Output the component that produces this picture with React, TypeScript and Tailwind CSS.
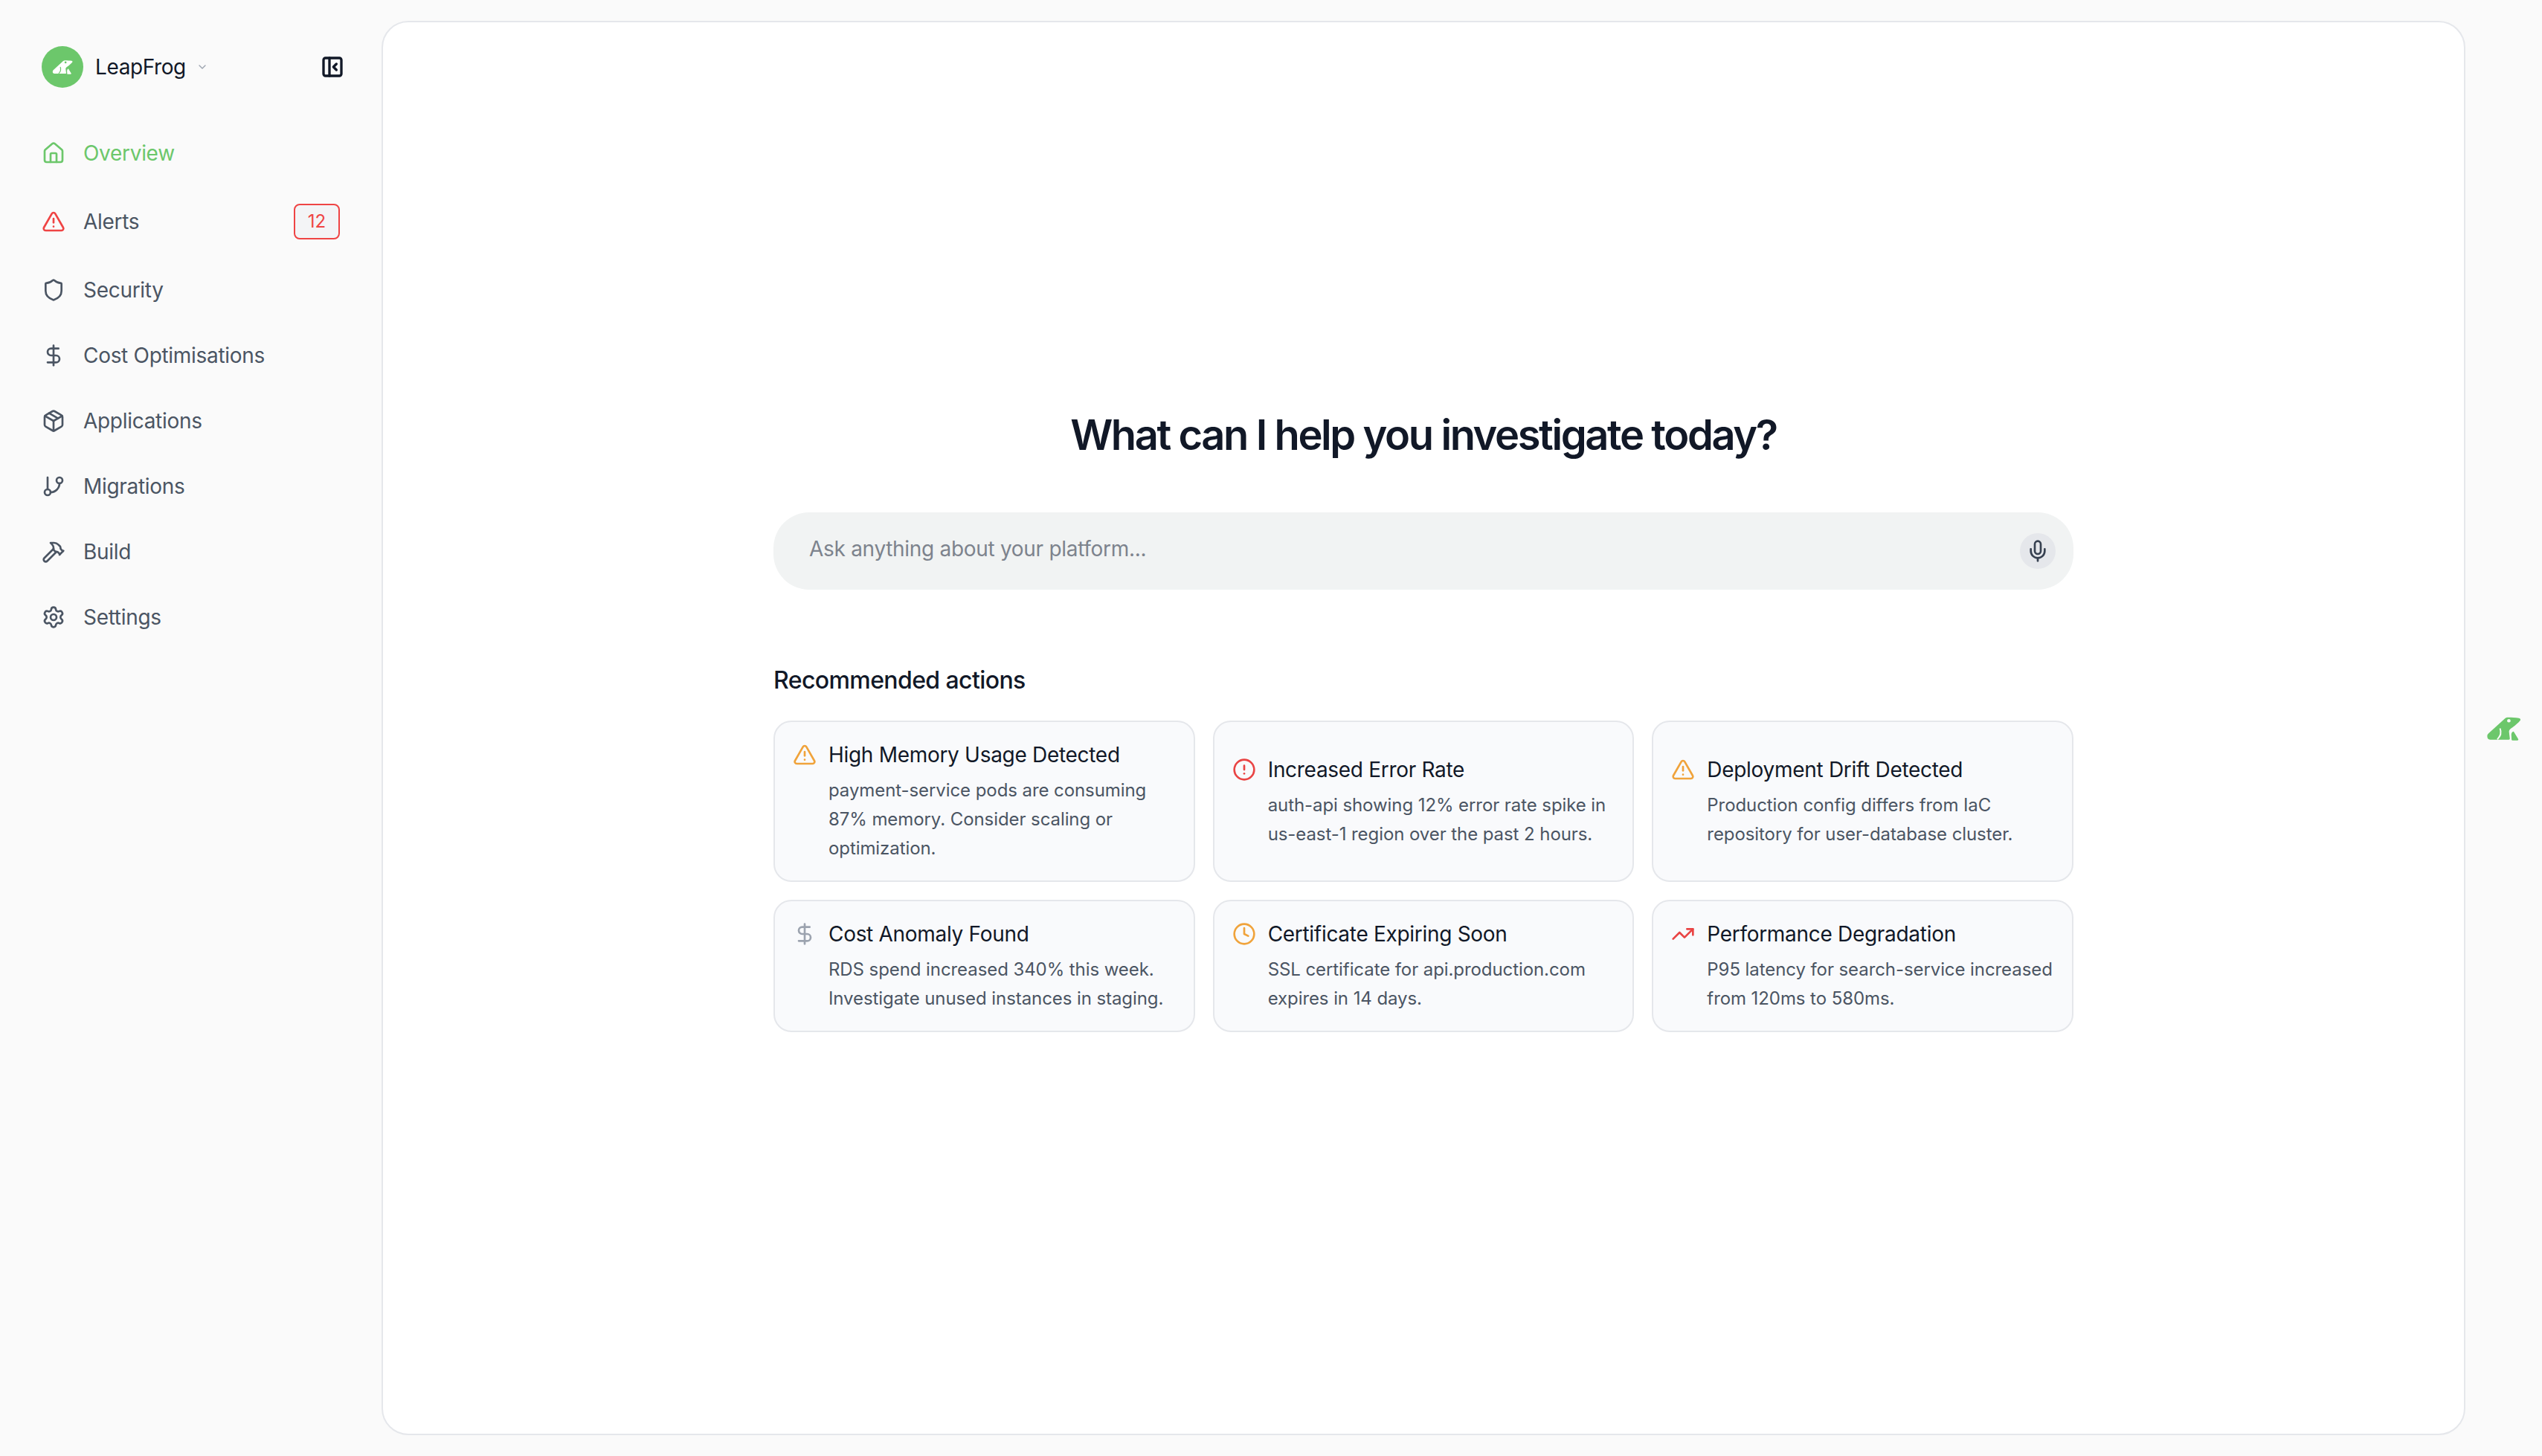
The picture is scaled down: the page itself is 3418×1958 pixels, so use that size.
import {
  ChevronDown,
  CircleAlert,
  Clock,
  DollarSign,
  Hammer,
  House,
  Mic,
  Package,
  PanelLeftClose,
  Settings,
  Shield,
  TrendingUp,
  TriangleAlert,
} from "lucide-react";

function FrogLogo({ className, eye }: { className: string; eye: string }) {
  return (
    <svg viewBox="188 130 142 100" className={className} fill="currentColor">
      <path d="M192 212c0-5 2-8 6-12l66-60c4-4 8-5 14-5 14 0 30 1 43 3 6 1 8 5 5 10-8 10-25 24-37 32-7 5-9 9-8 17l3 24c0 3-1 5-4 5h-76c-8 0-12-5-12-14z" />
      <path d="M296 194c2-2 4-1 5 1l17 28c2 3 0 6-3 6h-20c-3 0-4-2-4-5l-1-18c0-5 2-9 6-12z" />
      <path d="M244 180c6 15 5 29-11 45" fill="none" stroke={eye} strokeWidth="6" />
      <circle cx="280" cy="149" r="7" fill={eye} />
    </svg>
  );
}

// lucide's current git-branch has a different curve, this is the older one
function BranchIcon({ className }: { className: string }) {
  return (
    <svg viewBox="0 0 24 24" className={className} fill="none" stroke="currentColor" strokeWidth="2" strokeLinecap="round" strokeLinejoin="round">
      <line x1="6" y1="3" x2="6" y2="15" />
      <circle cx="18" cy="6" r="3" />
      <circle cx="6" cy="18" r="3" />
      <path d="M18 9a9 9 0 0 1-9 9" />
    </svg>
  );
}

const navItems = [
  { label: "Security", icon: Shield },
  { label: "Cost Optimisations", icon: DollarSign },
  { label: "Applications", icon: Package },
  { label: "Migrations", icon: BranchIcon },
  { label: "Build", icon: Hammer },
  { label: "Settings", icon: Settings },
];

const actions = [
  {
    title: "High Memory Usage Detected",
    text: "payment-service pods are consuming 87% memory. Consider scaling or optimization.",
    icon: TriangleAlert,
    color: "text-[#f0a33b]",
  },
  {
    title: "Increased Error Rate",
    text: "auth-api showing 12% error rate spike in us-east-1 region over the past 2 hours.",
    icon: CircleAlert,
    color: "text-[#e94444]",
  },
  {
    title: "Deployment Drift Detected",
    text: "Production config differs from IaC repository for user-database cluster.",
    icon: TriangleAlert,
    color: "text-[#f0a33b]",
  },
  {
    title: "Cost Anomaly Found",
    text: "RDS spend increased 340% this week. Investigate unused instances in staging.",
    icon: DollarSign,
    color: "text-[#9ca3af]",
  },
  {
    title: "Certificate Expiring Soon",
    text: "SSL certificate for api.production.com expires in 14 days.",
    icon: Clock,
    color: "text-[#f0a33b]",
  },
  {
    title: "Performance Degradation",
    text: "P95 latency for search-service increased from 120ms to 580ms.",
    icon: TrendingUp,
    color: "text-[#e94444]",
  },
];

export default function App() {
  return (
    <div className="flex h-screen w-full overflow-hidden bg-[#fafafa] font-['Inter',sans-serif]">
      {/* Sidebar */}
      <aside className="w-[513px] shrink-0 pl-[56px] pr-[50px] pt-[62px]">
        <div className="flex h-[56px] items-center justify-between">
          <div className="flex items-center">
            <div className="flex h-[56px] w-[56px] items-center justify-center rounded-full bg-[#6cc76b] text-white">
              <FrogLogo className="h-[20px] w-[28px]" eye="#6cc76b" />
            </div>
            <span className="ml-[16px] text-[28px] leading-[40px] font-normal tracking-[-0.4px] text-[#111827]">LeapFrog</span>
            <ChevronDown className="ml-[14px] h-[16px] w-[16px] text-[#9ca3af]" />
          </div>
          <PanelLeftClose className="h-[32px] w-[32px] text-[#111827]" strokeWidth={2.5} />
        </div>

        <nav className="mt-[44px] pr-[6px]">
          <div className="flex h-[88px] items-center gap-[24px] text-[#6cc76b]">
            <House className="h-[32px] w-[32px]" />
            <span className="text-[28px] leading-[40px] font-normal tracking-[-0.3px]">Overview</span>
          </div>
          <div className="flex h-[96px] items-center gap-[24px] text-[#4b5563]">
            <TriangleAlert className="h-[32px] w-[32px] text-[#ef4444]" />
            <span className="flex-1 text-[28px] leading-[40px] font-normal tracking-[-0.3px]">Alerts</span>
            <span className="flex h-[48px] w-[62px] items-center justify-center rounded-[8px] border-2 border-[#ef4444] bg-[#f3f4f6] text-[24px] font-normal text-[#ef4444]">
              12
            </span>
          </div>
          {navItems.map((item) => {
            const Icon = item.icon;
            return (
              <div key={item.label} className="flex h-[88px] items-center gap-[24px] text-[#4b5563]">
                <Icon className="h-[32px] w-[32px]" />
                <span className="text-[28px] leading-[40px] font-normal tracking-[-0.3px]">{item.label}</span>
              </div>
            );
          })}
        </nav>
      </aside>

      {/* Main panel */}
      <main className="my-[28px] flex flex-1 flex-col items-center rounded-[36px] border-2 border-[#e5e7eb] bg-white pt-[519px]">
        <div className="w-[1748px]">
          <h1 className="text-center text-[56px] leading-[72px] font-semibold tracking-[-2.4px] text-[#111827]">
            What can I help you investigate today?
          </h1>

          <div className="mt-[68px] flex h-[104px] items-center justify-between rounded-[48px] bg-[#f1f3f3] pl-[48px] pr-[24px]">
            <span className="-mt-[6px] text-[28px] leading-[40px] tracking-[-0.3px] text-[#7d838d]">Ask anything about your platform...</span>
            <button className="flex h-[48px] w-[48px] items-center justify-center rounded-full bg-[#e5e7eb] text-[#374151]">
              <Mic className="h-[32px] w-[32px]" />
            </button>
          </div>

          <h2 className="mt-[100px] text-[32px] leading-[44px] font-medium tracking-[-0.6px] text-[#111827]">Recommended actions</h2>

          <div className="mt-[32px] grid grid-cols-3 gap-[24px]">
            {actions.map((action) => {
              const Icon = action.icon;
              return (
                <div
                  key={action.title}
                  className="flex items-center rounded-[24px] border-2 border-[#e5e7eb] bg-[#f9fafc] p-[24px]"
                >
                  <div className="flex gap-[16px]">
                    <div className="flex h-[40px] shrink-0 items-center">
                      <Icon className={`h-[32px] w-[32px] ${action.color}`} />
                    </div>
                    <div>
                      <div className="text-[28px] leading-[40px] font-normal tracking-[-0.3px] text-[#111827]">{action.title}</div>
                      <p className="mt-[8px] text-[24px] leading-[39px] tracking-[-0.08px] text-[#4b5563]">{action.text}</p>
                    </div>
                  </div>
                </div>
              );
            })}
          </div>
        </div>
      </main>

      {/* Right rail */}
      <div className="flex w-[103px] shrink-0 items-center justify-center text-[#6cc76b]">
        <FrogLogo className="h-[33px] w-[47px]" eye="#fafafa" />
      </div>
    </div>
  );
}
